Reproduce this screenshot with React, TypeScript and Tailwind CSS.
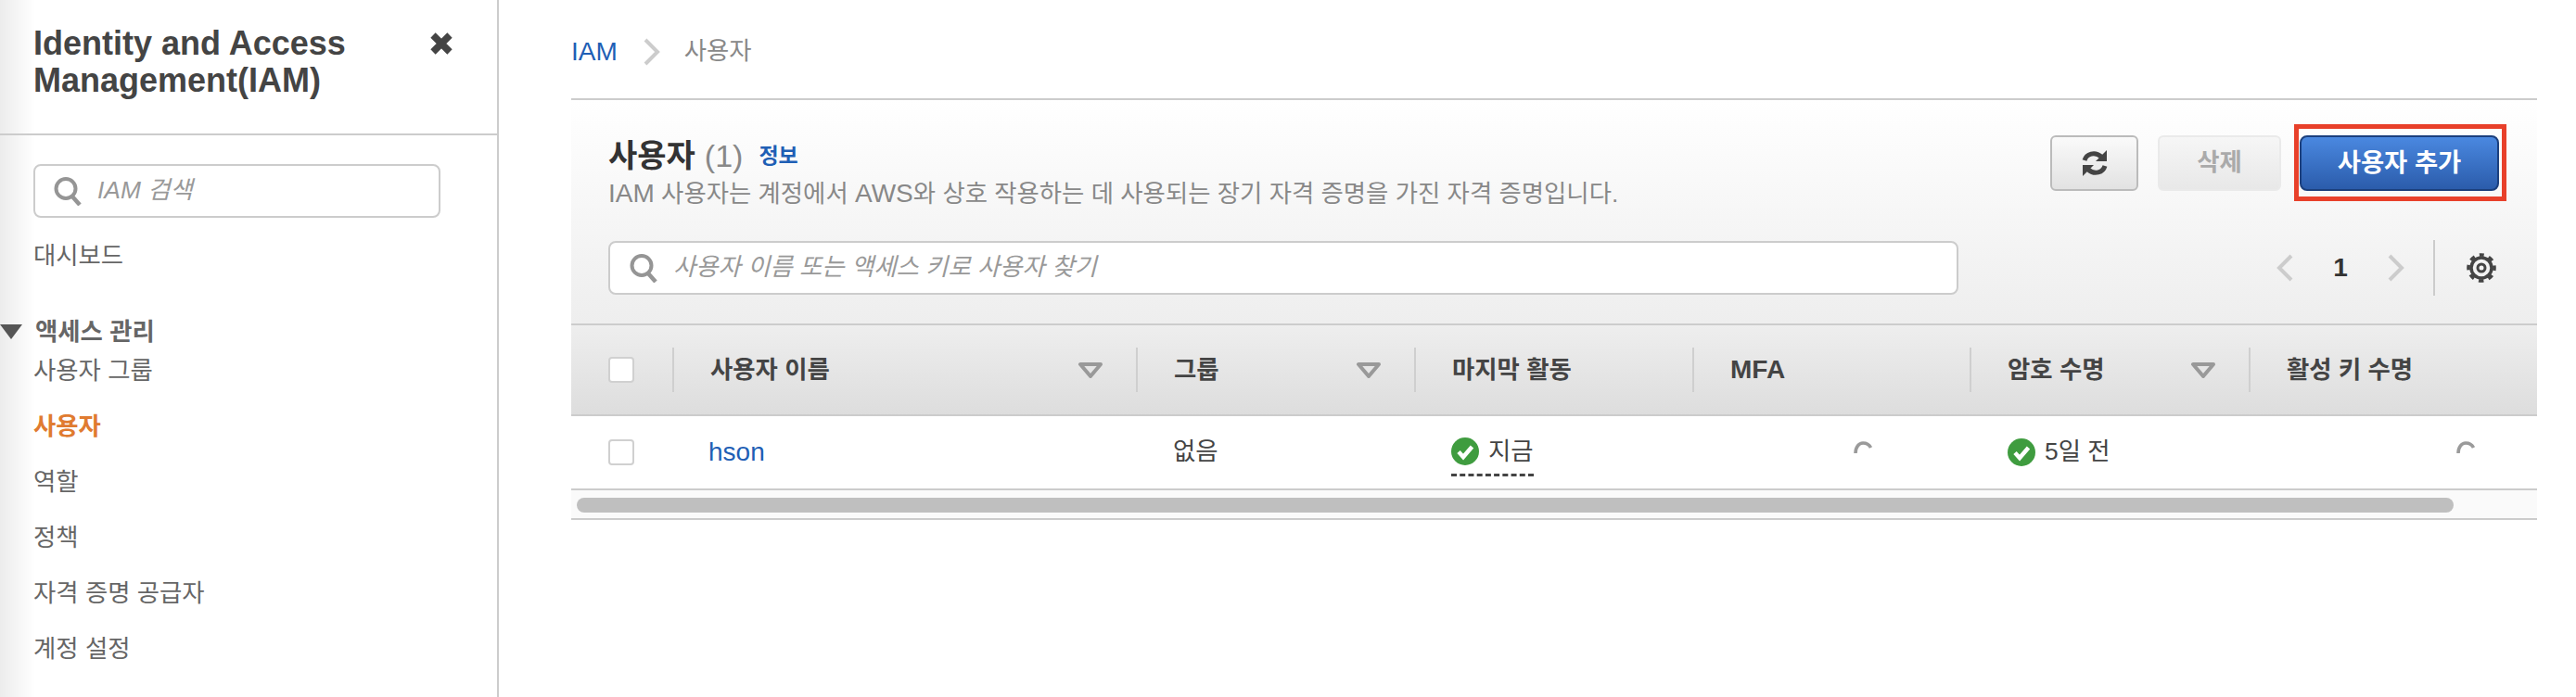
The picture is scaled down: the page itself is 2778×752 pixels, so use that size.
const Check = () => (
  <svg width="30" height="30" viewBox="0 0 30 30" className="shrink-0">
    <circle cx="15" cy="15" r="15" fill="#3f9c3f" />
    <path d="M8 15.5 L13 21 L22.5 10" fill="none" stroke="#fff" strokeWidth="4.5" />
  </svg>
);

const Spinner = () => (
  <svg width="20" height="14" viewBox="0 0 20 14">
    <path d="M2 13 C2 6 6 2 10 2 C14 2 17 4 18.5 7" fill="none" stroke="#9a9a9a" strokeWidth="3.6" />
  </svg>
);

const Search = () => (
  <svg width="30" height="32" viewBox="0 0 30 32" className="shrink-0">
    <circle cx="13" cy="13.5" r="10.5" fill="none" stroke="#959595" strokeWidth="4" />
    <path d="M20 22 L28 31" stroke="#959595" strokeWidth="4.5" />
  </svg>
);

const Sort = () => (
  <svg width="28" height="17" viewBox="0 0 28 17" className="shrink-0">
    <path d="M3 2 H25 L14 15 Z" fill="none" stroke="#999" strokeWidth="4" strokeLinejoin="round" />
  </svg>
);

const Chevron = ({ left }: { left?: boolean }) => (
  <svg width="18" height="30" viewBox="0 0 18 30">
    <path d={left ? "M16 2 L3 15 L16 28" : "M2 2 L15 15 L2 28"} fill="none" stroke="#ccc" strokeWidth="4" />
  </svg>
);

const Box = () => <div className="w-[28px] h-[28px] rounded-[4px] border-2 border-[#d0d0d0] bg-white" />;

const Head = ({ label, sort, latin }: { label: string; sort?: boolean; latin?: boolean }) => (
  <div className="flex items-center h-full">
    <div className="w-[2px] h-[48px] bg-[#cfcfcf] shrink-0" />
    <div className={latin
      ? "flex-1 flex items-center justify-between pl-[39px] pr-[35px] text-[28px] leading-[30px] font-bold text-[#444]"
      : "flex-1 flex items-center justify-between pl-[39px] pr-[35px] text-[26.4px] leading-[30px] font-bold text-[#444]"}>
      <span>{label}</span>
      {sort && <Sort />}
    </div>
  </div>
);

const NavItem = ({ label, active }: { label: string; active?: boolean }) => (
  <div className={active ? "h-[60px] flex items-center text-[26.4px] font-bold text-[#e07b30]" : "h-[60px] flex items-center text-[26.4px] text-[#666]"}>
    {label}
  </div>
);

export default function App() {
  return (
    <div className="flex w-[2778px] h-[752px] overflow-hidden bg-white font-['Liberation_Sans','Noto_Sans_CJK_KR',sans-serif]">
      <aside className="w-[538px] shrink-0 h-full border-r-2 border-[#ccc] bg-[linear-gradient(to_right,#ececec,#fff_38px)]">
        <div className="h-[146px] border-b-2 border-[#ccc] pl-[36px] pr-[47px] pt-[27px] flex justify-between items-start">
          <h1 className="text-[36px] leading-[40px] font-bold text-[#444]">
            Identity and Access
            <br />
            Management(IAM)
          </h1>
          <svg width="26" height="26" viewBox="0 0 26 26" className="mt-[7px]">
            <path d="M4 4 L22 22 M22 4 L4 22" stroke="#444" strokeWidth="7.5" />
          </svg>
        </div>
        <div className="pl-[36px]">
          <div className="mt-[31px] w-[439px] h-[58px] rounded-[8px] border-2 border-[#ccc] bg-white flex items-center pl-[20px] gap-[17px]">
            <Search />
            <span className="text-[26.4px] italic text-[#999]">IAM 검색</span>
          </div>
          <div className="mt-[12px]">
            <NavItem label="대시보드" />
          </div>
          <div className="mt-[40px] -ml-[36px] h-[24px] flex items-center gap-[14px] text-[26.4px] font-bold text-[#666]">
            <svg width="24" height="16" viewBox="0 0 24 16" className="shrink-0 -mt-[2px]">
              <path d="M0 0 H24 L12 16 Z" fill="#555" />
            </svg>
            <span>액세스 관리</span>
          </div>
          <NavItem label="사용자 그룹" />
          <NavItem label="사용자" active />
          <NavItem label="역할" />
          <NavItem label="정책" />
          <NavItem label="자격 증명 공급자" />
          <NavItem label="계정 설정" />
        </div>
      </aside>

      <main className="flex-1 min-w-0 pl-[78px] pr-[42px]">
        <nav className="h-[106px] pt-[6px] flex items-center text-[26.4px]">
          <span className="text-[28px] text-[#1f5fb5]">IAM</span>
          <span className="ml-[28px] mr-[26px] flex"><Chevron /></span>
          <span className="text-[#888]">사용자</span>
        </nav>

        <section className="border-t-2 border-[#ccc]">
          <div className="h-[243px] border-b-2 border-[#ccc] bg-[linear-gradient(to_bottom,#fff,#eee)] pl-[40px] pr-[41px]">
            <div className="flex justify-between items-start pt-[38px]">
              <div className="pt-[2px]">
                <div className="h-[40px] flex items-center">
                  <span className="text-[34px] font-bold text-[#333]">사용자</span>
                  <span className="ml-[10px] text-[34px] text-[#888]">(1)</span>
                  <span className="ml-[17px] text-[23px] font-bold text-[#1f5fb5]">정보</span>
                </div>
                <p className="mt-[3px] h-[36px] leading-[36px] text-[26.4px] text-[#888]">
                  <span className="text-[28px]">IAM</span> 사용자는 계정에서 <span className="text-[28px]">AWS</span>와 상호 작용하는 데 사용되는 장기 자격 증명을 가진 자격 증명입니다.
                </p>
              </div>
              <div className="flex items-start">
                <button className="w-[95px] h-[60px] rounded-[6px] border-2 border-[#bbb] bg-[linear-gradient(to_bottom,#fafafa,#e2e2e2)] flex items-center justify-center">
                  <svg width="30" height="32" viewBox="0 0 30 32">
                    <path d="M4 13 C6 6 15 3 22 9" fill="none" stroke="#444" strokeWidth="5" />
                    <path d="M28 2 V14 H16 Z" fill="#444" />
                    <path d="M26 19 C24 26 15 29 8 23" fill="none" stroke="#444" strokeWidth="5" />
                    <path d="M2 30 V18 H14 Z" fill="#444" />
                  </svg>
                </button>
                <button className="ml-[21px] w-[133px] h-[60px] rounded-[6px] border-2 border-[#eaeaea] bg-[linear-gradient(to_bottom,#f6f6f6,#e8e8e8)] text-[26.4px] font-bold text-[#aaa]">
                  삭제
                </button>
                <div className="relative ml-[20px]">
                  <button className="w-[215px] h-[60px] rounded-[8px] border-2 border-[#1b3f7d] bg-[linear-gradient(to_bottom,#4a88e0,#2b5cab)] text-[27.4px] font-bold text-white">
                    사용자 추가
                  </button>
                  <div className="absolute -left-[6px] -top-[12px] -right-[8px] -bottom-[11px] border-[5px] border-[#e8402a]" />
                </div>
              </div>
            </div>
            <div className="flex items-center mt-[32px]">
              <div className="w-[1456px] h-[58px] rounded-[8px] border-2 border-[#ccc] bg-white flex items-center pl-[21px] gap-[17px]">
                <Search />
                <span className="text-[26.4px] italic text-[#999]">사용자 이름 또는 액세스 키로 사용자 찾기</span>
              </div>
              <div className="flex items-center ml-[343px]">
                <Chevron left />
                <span className="w-[102px] text-center text-[28px] font-bold text-[#333]">1</span>
                <Chevron />
                <div className="ml-[31px] w-[2px] h-[60px] bg-[#ccc]" />
                <svg width="32" height="32" viewBox="0 0 32 32" className="ml-[34px]" fill="none" stroke="#444">
                  <circle cx="16" cy="16" r="11" strokeWidth="3.5" />
                  <circle cx="16" cy="16" r="14" strokeWidth="3.6" strokeDasharray="5.5 5.5" strokeDashoffset="2.75" transform="rotate(-90 16 16)" />
                  <circle cx="16" cy="16" r="4" strokeWidth="3" />
                </svg>
              </div>
            </div>
          </div>

          <div className="grid grid-cols-[109px_500px_300px_300px_299px_301px_311px] h-[98px] border-b-2 border-[#ccc] bg-[linear-gradient(to_bottom,#eee,#ddd)]">
            <div className="flex items-center pl-[40px]"><Box /></div>
            <Head label="사용자 이름" sort />
            <Head label="그룹" sort />
            <Head label="마지막 활동" />
            <Head label="MFA" latin />
            <Head label="암호 수명" sort />
            <Head label="활성 키 수명" />
          </div>

          <div className="grid grid-cols-[109px_500px_300px_300px_299px_301px_311px] h-[80px] border-b-2 border-[#ccc] text-[26.4px] text-[#444]">
            <div className="flex items-center pl-[40px]"><Box /></div>
            <div className="flex items-center pl-[39px] text-[28px] text-[#1f5fb5]">hson</div>
            <div className="flex items-center pl-[40px]">없음</div>
            <div className="flex items-center pl-[40px]">
              <span className="flex items-center gap-[10px] border-b-[3px] border-dashed border-[#444] pb-[4px] mt-[6px]">
                <Check />
                지금
              </span>
            </div>
            <div className="flex justify-end items-start pt-[27px] pr-[105px]"><Spinner /></div>
            <div className="flex items-center gap-[10px] pl-[41px]">
              <Check />
              5일 전
            </div>
            <div className="flex justify-end items-start pt-[27px] pr-[67px]"><Spinner /></div>
          </div>

          <div className="h-[32px] border-b-2 border-[#ccc] bg-[#fafafa] pt-[8px] pl-[6px]">
            <div className="w-[2024px] h-[16px] rounded-[8px] bg-[#bfbfbf]" />
          </div>
        </section>
      </main>
    </div>
  );
}
